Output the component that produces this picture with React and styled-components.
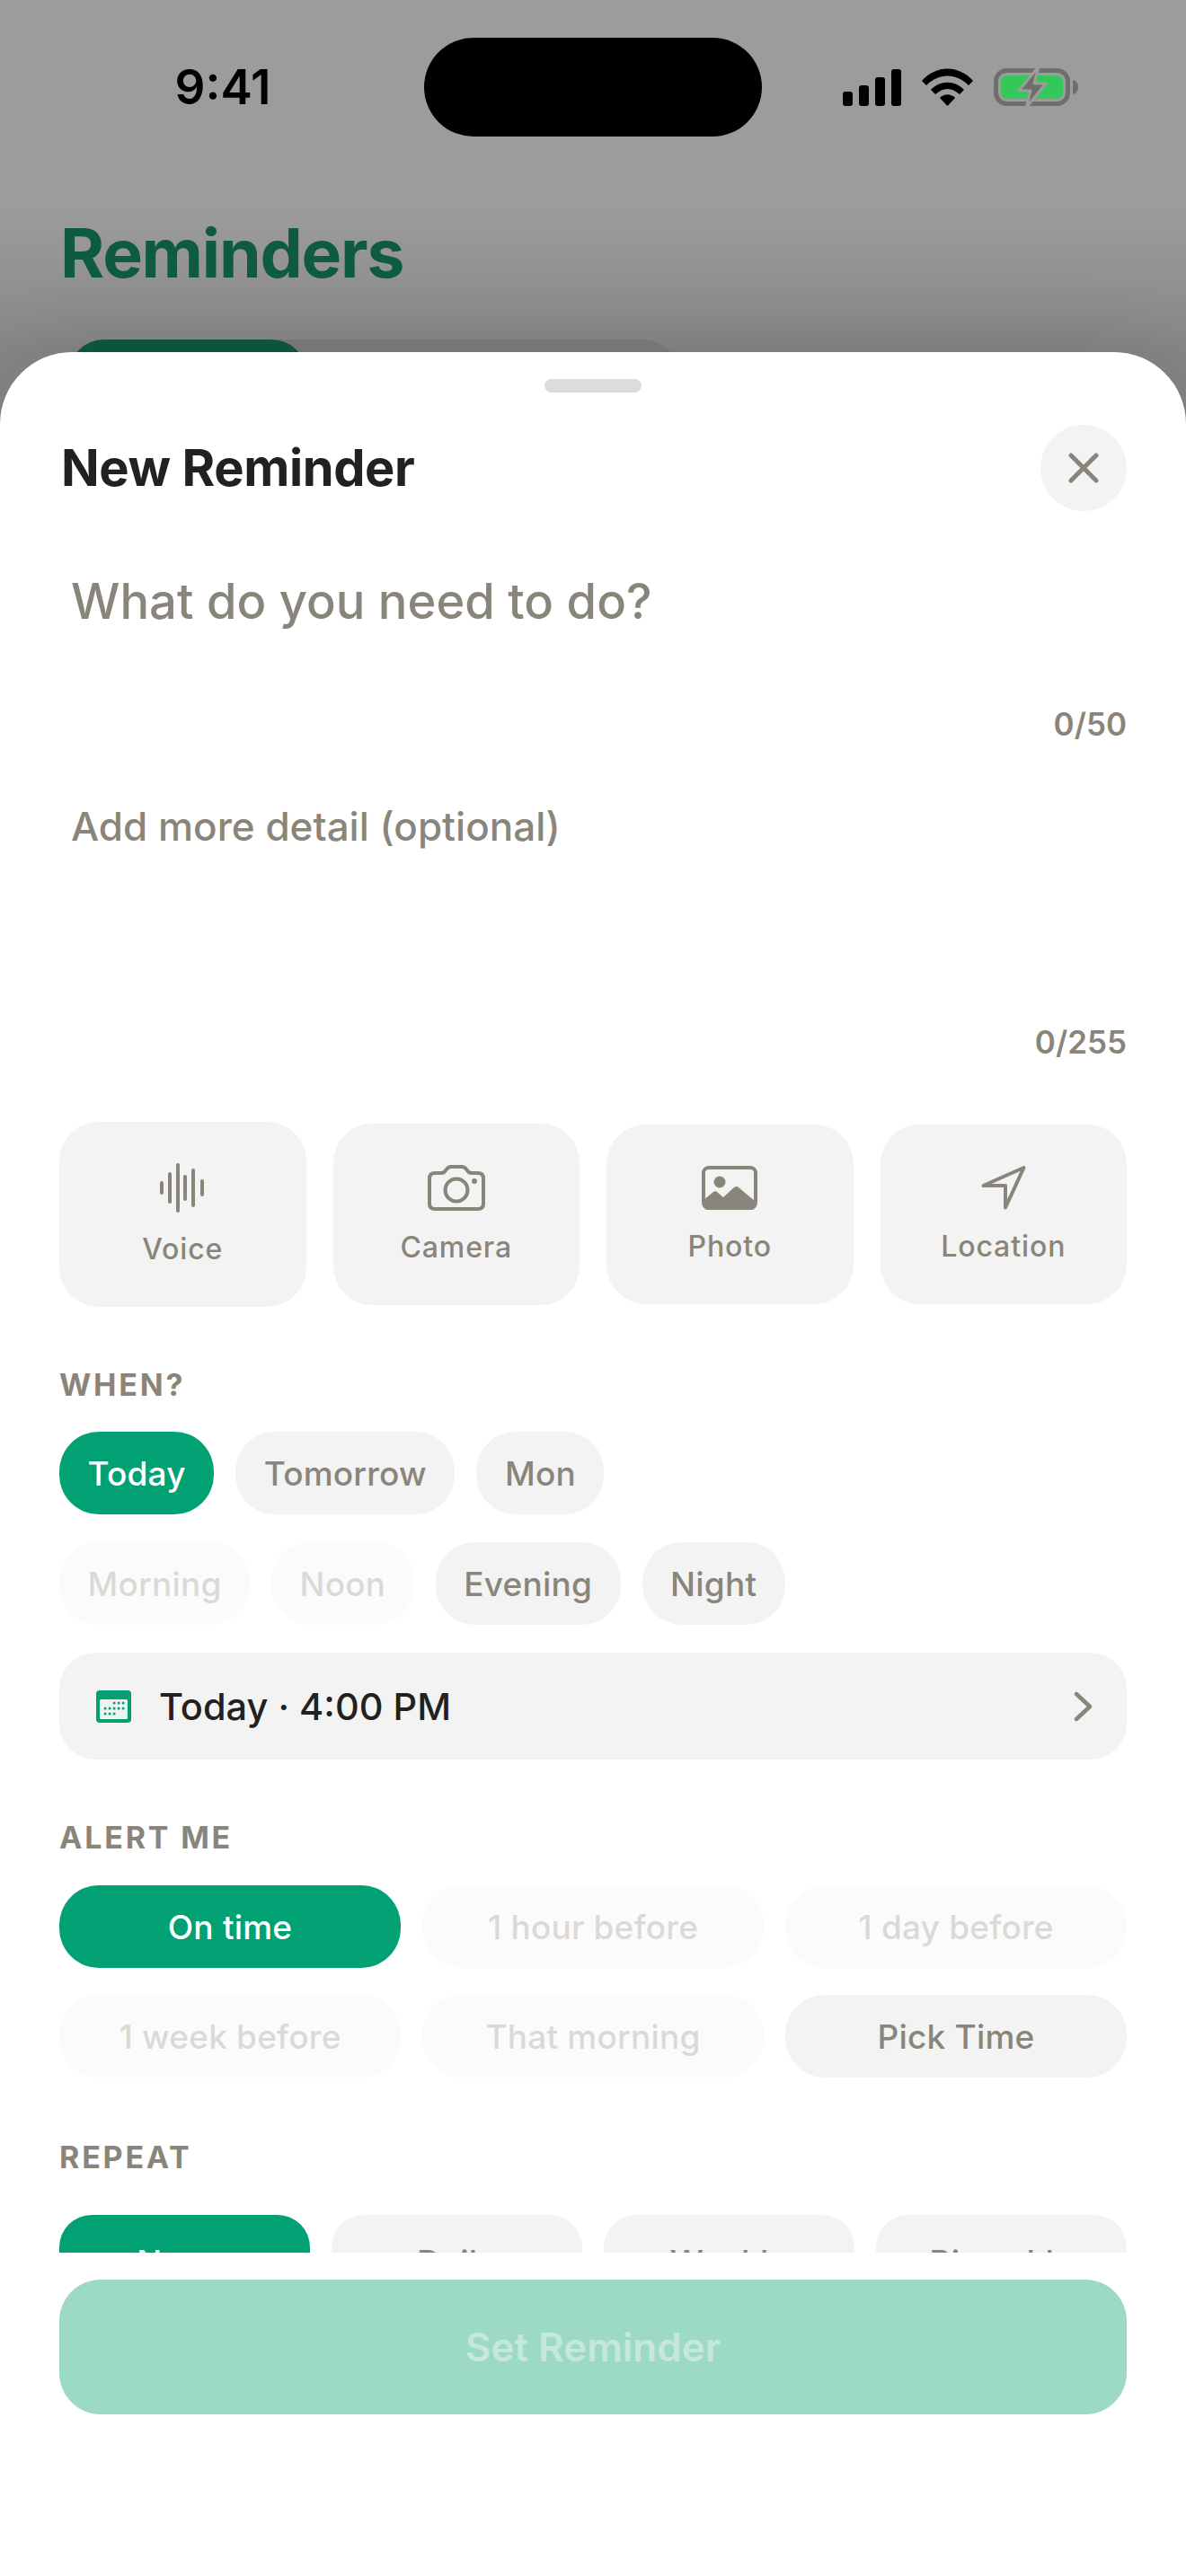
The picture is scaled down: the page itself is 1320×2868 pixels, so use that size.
import React from "react";
import styled, { createGlobalStyle } from "styled-components";

const GlobalStyle = createGlobalStyle`
  html, body {
    margin: 0;
    padding: 0;
    background: #fff;
  }
  * {
    box-sizing: border-box;
  }
`;

const Page = styled.div`
  position: relative;
  width: 1320px;
  height: 2868px;
  overflow: hidden;
  font-family: Inter, "Liberation Sans", sans-serif;
  background: linear-gradient(#9c9c9a 0, #9c9c9a 230px, #878786 392px);
`;

const StatusBar = styled.div`
  display: grid;
  grid-template-columns: 472px 376px 1fr;
  align-items: center;
  padding-top: 42px;
`;

const Time = styled.div`
  padding-left: 24px;
  text-align: center;
  font-size: 53px;
  font-weight: 600;
  color: #000;
`;

const Island = styled.div`
  height: 110px;
  border-radius: 55px;
  background: #000;
`;

const StatusIcons = styled.div`
  display: flex;
  align-items: center;
  padding-left: 90px;
  gap: 23px;
`;

const Backdrop = styled.div`
  padding: 0 68px;
`;

const BackTitle = styled.h1`
  margin: 86px 0 0 -1px;
  font-size: 75px;
  line-height: 88px;
  font-weight: 700;
  letter-spacing: -1.2px;
  color: #0f5a42;
`;

const Segments = styled.div`
  display: flex;
  width: 680px;
  height: 92px;
  margin: 52px 0 0 8px;
  border-radius: 40px;
  background: #7e7e7d;
`;

const SegmentActive = styled.div`
  width: 266px;
  border-radius: 40px;
  background: #0f5a42;
`;

const Sheet = styled.div`
  position: absolute;
  top: 392px;
  left: 0;
  right: 0;
  bottom: 0;
  display: flex;
  flex-direction: column;
  padding: 30px 66px 0;
  border-radius: 80px 80px 0 0;
  background: #fff;
  box-shadow: 0 0 90px rgba(0, 0, 0, 0.14);
`;

const Handle = styled.div`
  flex: none;
  width: 108px;
  height: 15px;
  margin: 0 auto;
  border-radius: 8px;
  background: #dcdcdc;
`;

const Header = styled.div`
  flex: none;
  display: flex;
  align-items: center;
  justify-content: space-between;
  margin-top: 36px;
  padding-left: 2px;
`;

const Title = styled.h2`
  margin: 0;
  font-size: 56px;
  font-weight: 700;
  letter-spacing: -0.4px;
  color: #22211f;
`;

const CloseButton = styled.div`
  display: flex;
  align-items: center;
  justify-content: center;
  width: 96px;
  height: 96px;
  border-radius: 50%;
  background: #f3f3f3;
`;

const Form = styled.div`
  flex: none;
  height: 1939px;
  overflow: hidden;
`;

const TitlePlaceholder = styled.div`
  margin: 60px 0 0 13px;
  height: 80px;
  line-height: 80px;
  font-size: 54.3px;
  font-weight: 500;
  color: #8a857b;
`;

const Counter = styled.div`
  margin-top: ${(p) => p.$top}px;
  height: 44px;
  line-height: 44px;
  text-align: right;
  font-size: 35px;
  font-weight: 600;
  color: #8a857b;
`;

const DetailPlaceholder = styled.div`
  margin: 62px 0 0 13px;
  height: 60px;
  line-height: 60px;
  font-size: 44px;
  font-weight: 500;
  color: #8a857b;
`;

const Actions = styled.div`
  display: grid;
  grid-template-columns: repeat(4, 1fr);
  gap: 30px;
  align-items: center;
  height: 206px;
  margin-top: 67px;
`;

const ActionCard = styled.div`
  display: flex;
  flex-direction: column;
  align-items: center;
  gap: 21px;
  padding: 46px 0 44px;
  border-radius: 44px;
  background: #f3f3f3;
`;

const ActionLabel = styled.span`
  font-size: 32px;
  line-height: 40px;
  font-weight: 500;
  letter-spacing: 0.9px;
  color: #8a857b;
`;

const SectionLabel = styled.div`
  margin-top: ${(p) => p.$top || 67}px;
  height: 40px;
  line-height: 40px;
  font-size: 34px;
  font-weight: 700;
  letter-spacing: 2.8px;
  color: #8a857b;
`;

const ChipRow = styled.div`
  display: flex;
  gap: 24px;
  margin-top: ${(p) => p.$top}px;
`;

const ChipGrid = styled.div`
  display: grid;
  grid-template-columns: repeat(3, 1fr);
  gap: 30px 24px;
  margin-top: 33px;
`;

const RepeatGrid = styled.div`
  display: grid;
  grid-template-columns: repeat(4, 1fr);
  gap: 24px;
  margin-top: 44px;
`;

const Chip = styled.div`
  display: flex;
  align-items: center;
  justify-content: center;
  height: ${(p) => (p.$tall ? 104 : 92)}px;
  padding: 0 31.5px;
  border-radius: ${(p) => (p.$tall ? 36 : 44)}px;
  font-size: 37px;
  font-weight: 500;
  letter-spacing: 0.2px;
  background: ${(p) => (p.$on ? "#02a173" : "#f3f3f3")};
  color: ${(p) => (p.$on ? "#fff" : "#8a857b")};
  opacity: ${(p) => (p.$dim ? 0.3 : 1)};
`;

const DateRow = styled.div`
  display: flex;
  align-items: center;
  height: 119px;
  margin-top: 31px;
  padding: 0 37px 0 41px;
  border-radius: 40px;
  background: #f3f3f3;
`;

const DateText = styled.span`
  flex: 1;
  margin-left: 31px;
  font-size: 41.5px;
  font-weight: 500;
  color: #22211f;
`;

const SubmitButton = styled.div`
  flex: none;
  display: flex;
  align-items: center;
  justify-content: center;
  height: 150px;
  margin-top: 30px;
  border-radius: 46px;
  font-size: 44px;
  font-weight: 600;
  background: #9cdac5;
  color: #c6e8dc;
`;

const gray = "#8a857b";

const SignalIcon = () => (
  <svg width="65" height="41" viewBox="0 0 65 41">
    <rect x="0" y="25" width="11" height="16" rx="3" />
    <rect x="18" y="18" width="11" height="23" rx="3" />
    <rect x="36" y="9" width="11" height="32" rx="3" />
    <rect x="54" y="0" width="11" height="41" rx="3" />
  </svg>
);

const WifiIcon = () => (
  <svg width="57" height="42" viewBox="0 0 57 42">
    <path d="M0 14 C16 -4 41 -4 57 14 L52 19 C38 5 19 5 5 19 Z" />
    <path d="M10 24 C20 13 37 13 47 24 L42 29 C33 21 24 21 15 29 Z" />
    <path d="M20 33 C25 28 32 28 37 33 L28.5 42 Z" />
  </svg>
);

const BatteryIcon = () => (
  <svg width="94" height="46" viewBox="0 0 94 46">
    <rect x="2.5" y="4.5" width="80" height="37" rx="12" fill="none" stroke="#6e6e6d" strokeWidth="5" />
    <rect x="8" y="10" width="69" height="26" rx="7" fill="#34c759" />
    <path d="M88 15 C92 16 94 19 94 23 C94 27 92 30 88 31 Z" fill="#6e6e6d" />
    <path
      d="M50 0 L28 27 H41 L36 46 L58 19 H45 Z"
      fill="#6e6e6d"
      stroke="#9c9c9a"
      strokeWidth="3"
      strokeLinejoin="round"
    />
  </svg>
);

const CloseIcon = () => (
  <svg width="34" height="34" viewBox="0 0 34 34" fill="none" stroke={gray} strokeWidth="5" strokeLinecap="round">
    <path d="M3 3 L31 31 M31 3 L3 31" />
  </svg>
);

const VoiceIcon = () => (
  <svg width="50" height="55" viewBox="0 0 50 55" fill="none" stroke={gray} strokeWidth="4" strokeLinecap="round">
    <path d="M2 22 V33 M11 12 V43 M20 2 V53 M28 15 V40 M37 8 V47 M47 20 V35" />
  </svg>
);

const CameraIcon = () => (
  <svg width="64" height="51" viewBox="0 0 64 51" fill="none" stroke={gray} strokeWidth="4">
    <path
      d="M8 9 H15 C18 9 19 8 20 6 C22 3 23 2 26 2 H38 C41 2 42 3 44 6 C45 8 46 9 49 9 H56 C60 9 62 11 62 15 V43 C62 47 60 49 56 49 H8 C4 49 2 47 2 43 V15 C2 11 4 9 8 9 Z"
      strokeLinejoin="round"
    />
    <circle cx="32" cy="28" r="12.5" />
    <circle cx="52" cy="18" r="3" fill={gray} stroke="none" />
  </svg>
);

const PhotoIcon = () => (
  <svg width="62" height="49" viewBox="0 0 62 49">
    <rect x="2" y="2" width="58" height="45" rx="6" fill="none" stroke={gray} strokeWidth="4" />
    <circle cx="20" cy="18" r="6.5" fill={gray} />
    <path
      d="M2 38 L13 29 C14.5 28 16 28 17 29 L24 35 L36 24 C38 22.5 40 22.5 41 24 L60 40 V43 C60 46 58 49 55 49 H7 C4 49 2 46 2 43 Z"
      fill={gray}
    />
  </svg>
);

const LocationIcon = () => (
  <svg width="50" height="49" viewBox="0 0 50 49" fill="none" stroke={gray} strokeWidth="4" strokeLinejoin="round">
    <path d="M2.5 22 L47.5 2 L27 46.5 V22 Z" />
  </svg>
);

const CalendarIcon = () => (
  <svg width="39" height="36" viewBox="0 0 39 36">
    <rect width="39" height="36" rx="4" fill="#02a173" />
    <rect x="4" y="10" width="31" height="22" rx="1.5" fill="#eef3f0" />
    {[
      [20, 14], [25, 14], [30, 14],
      [10, 20], [15, 20], [20, 20], [25, 20], [30, 20],
      [10, 26], [15, 26], [20, 26],
    ].map(([x, y]) => (
      <rect key={`${x}-${y}`} x={x - 1.2} y={y - 1.2} width="2.6" height="2.6" fill="#02a173" />
    ))}
  </svg>
);

const ChevronIcon = () => (
  <svg width="22" height="34" viewBox="0 0 22 34" fill="none" stroke={gray} strokeWidth="4.5" strokeLinecap="round" strokeLinejoin="round">
    <path d="M3 3 L18 17 L3 31" />
  </svg>
);

const actions = [
  { label: "Voice", Icon: VoiceIcon },
  { label: "Camera", Icon: CameraIcon },
  { label: "Photo", Icon: PhotoIcon },
  { label: "Location", Icon: LocationIcon },
];

const whenDays = [{ label: "Today", on: true }, { label: "Tomorrow" }, { label: "Mon" }];

const whenParts = [
  { label: "Morning", dim: true },
  { label: "Noon", dim: true },
  { label: "Evening" },
  { label: "Night" },
];

const alerts = [
  { label: "On time", on: true },
  { label: "1 hour before", dim: true },
  { label: "1 day before", dim: true },
  { label: "1 week before", dim: true },
  { label: "That morning", dim: true },
  { label: "Pick Time" },
];

const repeats = [{ label: "Never", on: true }, { label: "Daily" }, { label: "Weekly" }, { label: "Biweekly" }];

const renderChips = (list, tall) =>
  list.map((c) => (
    <Chip key={c.label} $on={c.on} $dim={c.dim} $tall={tall}>
      {c.label}
    </Chip>
  ));

const App = () => {
  return (
    <Page>
      <GlobalStyle />
      <StatusBar>
        <Time>9:41</Time>
        <Island />
        <StatusIcons>
          <SignalIcon />
          <WifiIcon />
          <BatteryIcon />
        </StatusIcons>
      </StatusBar>

      <Backdrop>
        <BackTitle>Reminders</BackTitle>
        <Segments>
          <SegmentActive />
        </Segments>
      </Backdrop>

      <Sheet>
        <Handle />
        <Header>
          <Title>New Reminder</Title>
          <CloseButton>
            <CloseIcon />
          </CloseButton>
        </Header>

        <Form>
          <TitlePlaceholder>What do you need to do?</TitlePlaceholder>
          <Counter $top={75}>0/50</Counter>
          <DetailPlaceholder>Add more detail (optional)</DetailPlaceholder>
          <Counter $top={188}>0/255</Counter>

          <Actions>
            {actions.map(({ label, Icon }) => (
              <ActionCard key={label}>
                <Icon />
                <ActionLabel>{label}</ActionLabel>
              </ActionCard>
            ))}
          </Actions>

          <SectionLabel>WHEN?</SectionLabel>
          <ChipRow $top={32}>{renderChips(whenDays)}</ChipRow>
          <ChipRow $top={31}>{renderChips(whenParts)}</ChipRow>
          <DateRow>
            <CalendarIcon />
            <DateText>Today · 4:00 PM</DateText>
            <ChevronIcon />
          </DateRow>

          <SectionLabel>ALERT ME</SectionLabel>
          <ChipGrid>{renderChips(alerts)}</ChipGrid>

          <SectionLabel $top={69}>REPEAT</SectionLabel>
          <RepeatGrid>{renderChips(repeats, true)}</RepeatGrid>
        </Form>

        <SubmitButton>Set Reminder</SubmitButton>
      </Sheet>
    </Page>
  );
};

export default App;
